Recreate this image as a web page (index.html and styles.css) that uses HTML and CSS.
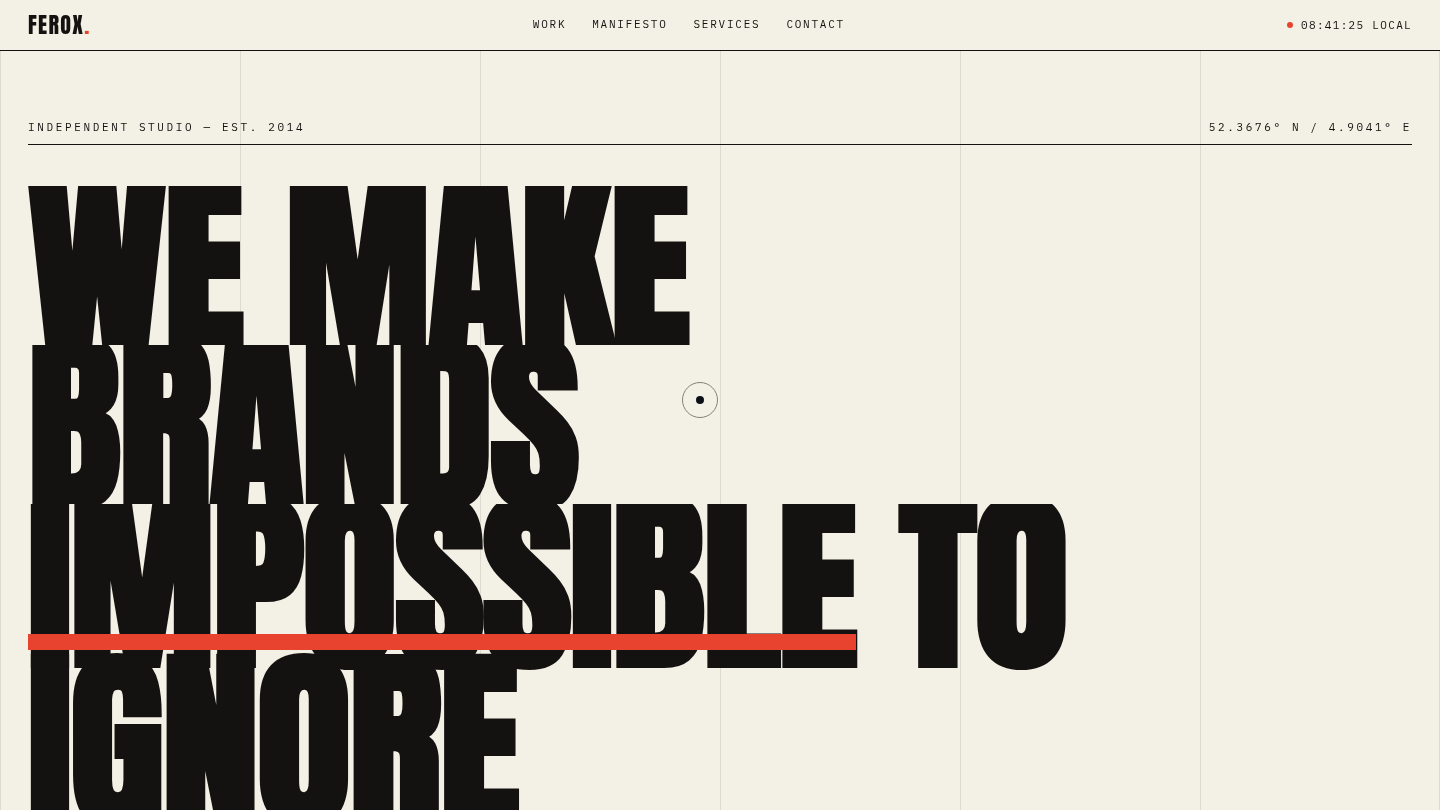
FILE: index.html
```html
<!DOCTYPE html>
<html lang="en">
<head>
<meta charset="utf-8">
<meta name="viewport" content="width=device-width, initial-scale=1">
<title>Ferox — Independent Studio</title>
<link rel="stylesheet" href="styles.css">
</head>
<body>
<div class="grid-lines" aria-hidden="true"><span></span><span></span><span></span><span></span><span></span><span></span></div>
<header class="topbar">
  <a class="logo" href="#top">FEROX<span class="logo-dot">.</span></a>
  <nav class="nav" aria-label="Main">
    <a href="#work">WORK</a>
    <a href="#manifesto">MANIFESTO</a>
    <a href="#services">SERVICES</a>
    <a href="#contact">CONTACT</a>
  </nav>
  <div class="clock"><span class="clock-dot"></span><time>08:41:25 LOCAL</time></div>
</header>
<main class="hero" id="top">
  <div class="meta">
    <span>INDEPENDENT STUDIO — EST. 2014</span>
    <span>52.3676° N / 4.9041° E</span>
  </div>
  <h1 class="headline">
    <span class="line">WE MAKE</span>
    <span class="line">BRANDS</span>
    <span class="line"><span class="strike">IMPOSSIBLE</span> TO<br>IGNORE</span>
  </h1>
</main>
<div class="cursor" aria-hidden="true"><span class="cursor-dot"></span></div>
</body>
</html>
```
FILE: styles.css
```css
:root {
  --paper: #f3f0e5;
  --ink: #141210;
  --red: #e8432e;
  --rule: #dddbd0;
  --gutter: 28px;
}

* { box-sizing: border-box; }

body {
  margin: 0;
  background: var(--paper);
  color: var(--ink);
  font-family: "IBM Plex Mono", "Liberation Mono", monospace;
  font-size: 11px;
  line-height: 16px;
}

a { color: inherit; text-decoration: none; }

.grid-lines {
  position: fixed;
  inset: 0;
  z-index: -1;
  display: grid;
  grid-template-columns: repeat(6, 1fr);
}
.grid-lines span { border-left: 1px solid var(--rule); }
.grid-lines span:last-child { border-right: 1px solid var(--rule); }

.topbar {
  display: flex;
  align-items: center;
  justify-content: space-between;
  padding: 8px var(--gutter);
  background: var(--paper);
  border-bottom: 1px solid var(--ink);
}

.logo {
  font-family: Anton, Impact, sans-serif;
  font-size: 22px;
  line-height: 34px;
  letter-spacing: 0.06em;
}
.logo-dot { color: var(--red); }

.nav {
  display: flex;
  gap: 26px;
  padding-bottom: 2px;
  letter-spacing: 0.16em;
}

.clock {
  display: flex;
  align-items: center;
  gap: 8px;
  letter-spacing: 0.12em;
}
.clock-dot {
  width: 6px;
  height: 6px;
  border-radius: 50%;
  background: var(--red);
}

.hero { padding: 68px var(--gutter) 40px; }

.meta {
  display: flex;
  justify-content: space-between;
  padding-bottom: 9px;
  border-bottom: 1px solid var(--ink);
  letter-spacing: 0.24em;
}

.headline {
  margin: 41px 0 0;
  font-family: Anton, Impact, sans-serif;
  font-size: 194px;
  font-weight: 700;
  line-height: 159px;
  letter-spacing: -0.01em;
}
.line { display: block; overflow: hidden; }

.strike { position: relative; display: inline-block; }
.strike::after {
  content: "";
  position: absolute;
  left: 0;
  right: 0;
  bottom: 13px;
  height: 16px;
  background: var(--red);
}

.cursor {
  position: fixed;
  left: 682px;
  top: 382px;
  display: grid;
  place-items: center;
  width: 36px;
  height: 36px;
  border: 1px solid #83827c;
  border-radius: 50%;
  pointer-events: none;
}
.cursor-dot {
  width: 8px;
  height: 8px;
  border-radius: 50%;
  background: #0b0f18;
}
```
